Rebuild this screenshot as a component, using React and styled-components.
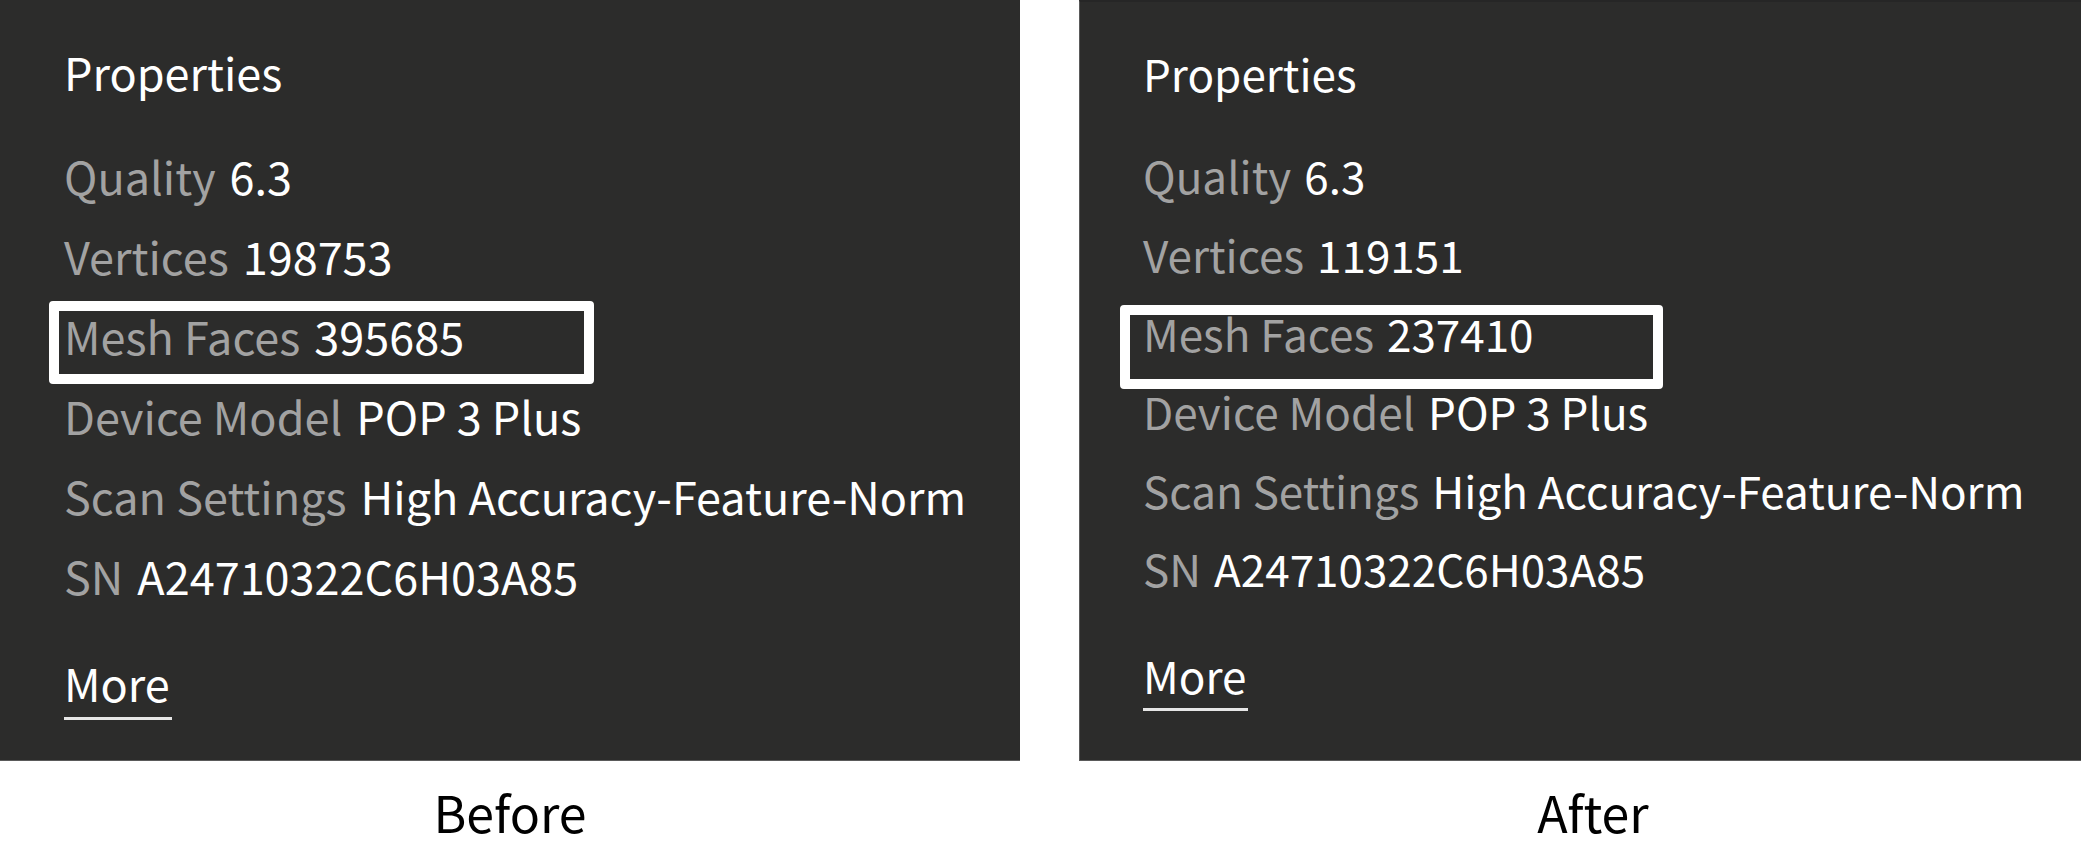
import React from "react";
import styled, { createGlobalStyle } from "styled-components";

const Global = createGlobalStyle`
  html, body { margin: 0; padding: 0; background: #ffffff; }
  body { font-family: "Noto Sans CJK SC", "Noto Sans", sans-serif; }
`;

const Page = styled.div`
  width: 2081px;
  height: 859px;
  display: flex;
  gap: 59px;
  overflow: hidden;
  background: #fff;
`;

const Column = styled.div`
  width: ${(p) => p.$w}px;
  flex: none;
  display: flex;
  flex-direction: column;
`;

const Panel = styled.section`
  height: 761px;
  box-sizing: border-box;
  background: #2c2c2b;
  border-bottom: 1px solid #5a5a5a;
  border-left: ${(p) => (p.$edge ? "1px solid #5a5a5a" : "none")};
  border-top: ${(p) => (p.$edge ? "2px solid #262626" : "none")};
  padding: ${(p) => p.$top}px 0 0 ${(p) => p.$pad}px;
  font-size: ${(p) => p.$fs}px;
  display: flex;
  flex-direction: column;
  align-items: flex-start;
`;

const Title = styled.h2`
  margin: 0 0 ${(p) => p.$after}px;
  font-size: 1em;
  font-weight: 400;
  color: #ffffff;
  line-height: ${(p) => p.$lh}px;
`;

const List = styled.div`
  display: flex;
  flex-direction: column;
`;

const Row = styled.div`
  position: relative;
  display: flex;
  gap: ${(p) => p.$gap}px;
  line-height: ${(p) => p.$lh}px;
  white-space: nowrap;
`;

const Label = styled.span`
  color: #a2a2a2;
`;

const Value = styled.span`
  color: #ffffff;
`;

const Highlight = styled.div`
  position: absolute;
  left: ${(p) => p.$x}px;
  top: ${(p) => p.$y}px;
  width: ${(p) => p.$w}px;
  height: ${(p) => p.$h}px;
  box-sizing: border-box;
  border: 10px solid #ffffff;
  border-radius: 4px;
  pointer-events: none;
`;

const More = styled.a`
  margin-top: ${(p) => p.$gap}px;
  display: inline-block;
  color: #ffffff;
  text-decoration: none;
  line-height: 1;
  padding: 0 2px ${(p) => p.$under}px 0;
  border-bottom: 3px solid #e6e6e6;
`;

const Caption = styled.div`
  flex: 1;
  display: flex;
  justify-content: center;
  padding-left: ${(p) => p.$shift || 0}px;
  padding-top: 25px;
  font-size: 50px;
  line-height: 1;
  color: #000;
`;

const rows = (vertices, faces) => [
  ["Quality", "6.3"],
  ["Vertices", vertices],
  ["Mesh Faces", faces, true],
  ["Device Model", "POP 3 Plus"],
  ["Scan Settings", "High Accuracy-Feature-Norm"],
  ["SN", "A24710322C6H03A85"],
];

function PropertiesPanel({ cfg, vertices, faces }) {
  return (
    <Panel $fs={cfg.fs} $pad={cfg.pad} $top={cfg.top} $edge={cfg.edge}>
      <Title $lh={cfg.lh} $after={cfg.titleGap}>Properties</Title>
      <List>
        {rows(vertices, faces).map(([k, v, hl]) => (
          <Row key={k} $lh={cfg.lh} $gap={cfg.gap}>
            <Label>{k}</Label>
            <Value>{v}</Value>
            {hl && <Highlight $x={cfg.box.x} $y={cfg.box.y} $w={cfg.box.w} $h={cfg.box.h} />}
          </Row>
        ))}
      </List>
      <More href="#" $gap={cfg.moreGap} $under={cfg.under}>More</More>
    </Panel>
  );
}

const leftCfg = {
  fs: 45,
  lh: 80,
  pad: 64,
  top: 32,
  gap: 14,
  titleGap: 24,
  moreGap: 44,
  under: 12,
  edge: false,
  box: { x: -15, y: 5, w: 545, h: 83 },
};

const rightCfg = {
  fs: 44,
  lh: 78.6,
  pad: 63,
  top: 31.5,
  gap: 13,
  titleGap: 24.4,
  moreGap: 45,
  under: 11,
  edge: true,
  box: { x: -23, y: 11, w: 543, h: 84 },
};

export default function App() {
  return (
    <>
      <Global />
      <Page>
        <Column $w={1020}>
          <PropertiesPanel cfg={leftCfg} vertices="198753" faces="395685" />
          <Caption>Before</Caption>
        </Column>
        <Column $w={1002}>
          <PropertiesPanel cfg={rightCfg} vertices="119151" faces="237410" />
          <Caption $shift={26}>After</Caption>
        </Column>
      </Page>
    </>
  );
}
